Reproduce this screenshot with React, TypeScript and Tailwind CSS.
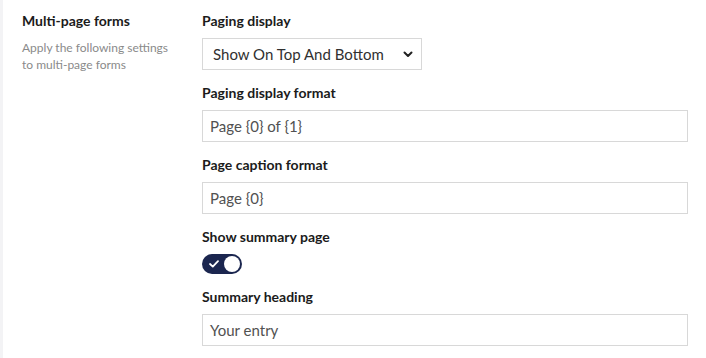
import React from 'react';

const Label = ({ children }: { children: React.ReactNode }) => (
  <div className="text-[14px] leading-[20px] font-bold text-[#1b1b1b] mb-[7px]">{children}</div>
);

const TextField = ({ value }: { value: string }) => (
  <div className="h-[32px] w-full border border-[#d8d8d8] bg-white px-[7px] flex items-center text-[15px] text-[#515151]">
    {value}
  </div>
);

export default function App() {
  return (
    <div className="w-[706px] h-[358px] bg-white flex font-['Lato','Open_Sans',sans-serif] overflow-hidden">
      <div className="w-[3px] bg-[#f3f3f5] shrink-0" />
      <div className="flex flex-1 pl-[19px] pr-[18px] pt-[11px]">
        <div className="w-[180px] shrink-0">
          <div className="text-[14px] leading-[20px] font-bold text-[#1b1b1b] mb-[8px]">Multi-page forms</div>
          <p className="text-[12px] leading-[17px] text-[#8a8a8a]">
            Apply the following settings
            <br />
            to multi-page forms
          </p>
        </div>
        <div className="flex-1 flex flex-col gap-[13px]">
          <div>
            <Label>Paging display</Label>
            <div className="relative h-[32px] w-[220px] border border-[#d8d8d8] bg-white flex items-center pl-[10px] text-[15px] text-[#303030]">
              Show On Top And Bottom
              <svg className="absolute right-[8px] top-[12px]" width="10" height="7" viewBox="0 0 10 7" fill="none">
                <path d="M1.5 1.5 L5 5 L8.5 1.5" stroke="#222" strokeWidth="2" strokeLinecap="round" strokeLinejoin="round" />
              </svg>
            </div>
          </div>
          <div>
            <Label>Paging display format</Label>
            <TextField value="Page {0} of {1}" />
          </div>
          <div>
            <Label>Page caption format</Label>
            <TextField value="Page {0}" />
          </div>
          <div>
            <Label>Show summary page</Label>
            <div className="relative h-[20px] w-[40px] rounded-full bg-[#1b264f] flex items-center justify-end pr-[2px]">
              <svg className="absolute left-[7px] top-[6px]" width="10" height="8" viewBox="0 0 10 8" fill="none">
                <path d="M1 4 L3.8 6.6 L9 1.2" stroke="#fff" strokeWidth="1.8" strokeLinecap="round" strokeLinejoin="round" />
              </svg>
              <div className="w-[16px] h-[16px] rounded-full bg-white" />
            </div>
          </div>
          <div>
            <Label>Summary heading</Label>
            <TextField value="Your entry" />
          </div>
        </div>
      </div>
    </div>
  );
}
